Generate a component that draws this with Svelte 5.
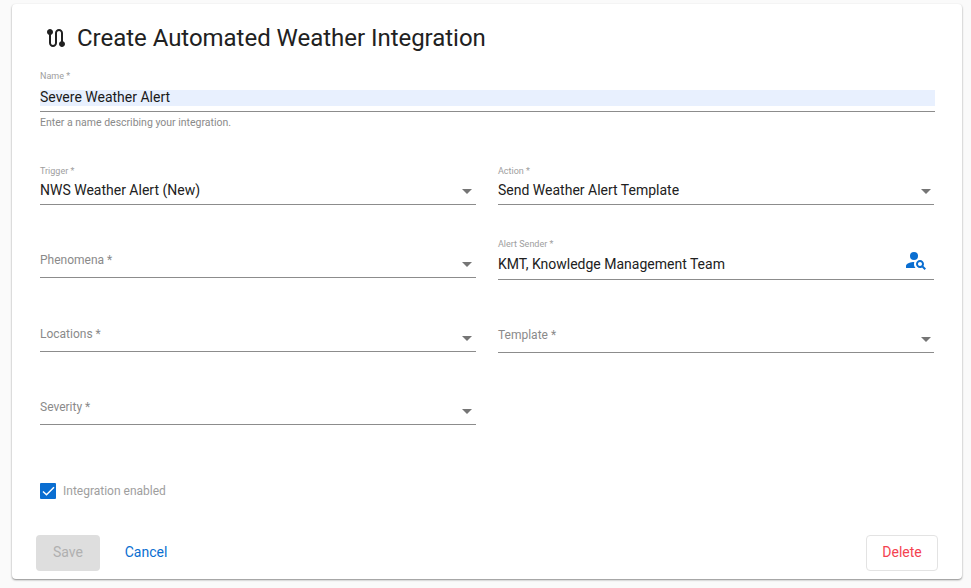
<script>
	const leftFields = [
		{ label: 'Trigger *', value: 'NWS Weather Alert (New)' },
		{ label: 'Phenomena *', value: '' },
		{ label: 'Locations *', value: '' },
		{ label: 'Severity *', value: '' }
	];
	const rightFields = [
		{ label: 'Action *', value: 'Send Weather Alert Template' },
		{ label: 'Alert Sender *', value: 'KMT, Knowledge Management Team', search: true },
		{ label: 'Template *', value: '' }
	];
</script>

{#snippet field(f)}
	<div class="field" class:tall={f.search}>
		{#if f.value}
			<span class="field__label">{f.label}</span>
			<span class="field__value">{f.value}</span>
		{:else}
			<span class="field__placeholder">{f.label}</span>
		{/if}
		{#if f.search}
			<svg class="field__search" viewBox="0 0 24 24" width="24" height="24" aria-hidden="true">
				<circle cx="10" cy="8" r="4" />
				<path d="M10.35 14.01C7.62 13.91 2 15.27 2 18v2h9.54c-2.47-2.76-1.23-5.89-1.19-5.99z" />
				<path d="M19.43 18.02c.36-.59.57-1.28.57-2.02 0-2.21-1.79-4-4-4s-4 1.79-4 4 1.79 4 4 4c.74 0 1.43-.22 2.02-.57L20.59 22 22 20.59l-2.57-2.57zM16 18c-1.1 0-2-.9-2-2s.9-2 2-2 2 .9 2 2-.9 2-2 2z" />
			</svg>
		{:else}
			<span class="field__arrow"></span>
		{/if}
	</div>
{/snippet}

<div class="page">
	<main class="card">
		<h1 class="title">
			<svg viewBox="0 0 24 24" width="24" height="24" aria-hidden="true">
				<path d="M19 15.18V7c0-2.21-1.79-4-4-4s-4 1.79-4 4v10c0 1.1-.9 2-2 2s-2-.9-2-2V8.82C8.16 8.4 9 7.3 9 6c0-1.66-1.34-3-3-3S3 4.34 3 6c0 1.3.84 2.4 2 2.82V17c0 2.21 1.79 4 4 4s4-1.79 4-4V7c0-1.1.9-2 2-2s2 .9 2 2v8.18c-1.16.41-2 1.51-2 2.82 0 1.66 1.34 3 3 3s3-1.34 3-3c0-1.3-.84-2.4-2-2.82z" />
			</svg>
			Create Automated Weather Integration
		</h1>

		<div class="name">
			<span class="field__label">Name *</span>
			<span class="name__value">Severe Weather Alert</span>
			<span class="name__help">Enter a name describing your integration.</span>
		</div>

		<div class="columns">
			<div class="column">
				{#each leftFields as f}
					{@render field(f)}
				{/each}
			</div>
			<div class="column">
				{#each rightFields as f}
					{@render field(f)}
				{/each}
			</div>
		</div>

		<div class="check">
			<span class="check__box">
				<svg viewBox="0 0 16 16" width="16" height="16" aria-hidden="true">
					<path d="M3 8.5l3.5 3.2L14 4.3" />
				</svg>
			</span>
			<span>Integration enabled</span>
		</div>

		<div class="actions">
			<button class="btn btn--save" disabled>Save</button>
			<button class="btn btn--cancel">Cancel</button>
			<button class="btn btn--delete">Delete</button>
		</div>
	</main>
</div>

<style>
	:global(body) {
		background: #fafafa;
		font-family: Roboto, "Liberation Sans", sans-serif;
	}
	.page {
		height: 588px;
		padding: 4px 9px 9px 12px;
		box-sizing: border-box;
	}
	.card {
		height: 575px;
		box-sizing: border-box;
		background: #fff;
		border-radius: 4px;
		box-shadow: 0 1px 2px rgba(0, 0, 0, 0.45);
		padding: 16px 24px 8px 24px;
		display: flex;
		flex-direction: column;
	}
	.title {
		display: flex;
		align-items: center;
		gap: 9px;
		margin: 0 0 0 8px;
		height: 36px;
		font-size: 24px;
		font-weight: 400;
		letter-spacing: -0.03px;
		color: #212121;
	}
	.title svg {
		fill: #212121;
	}
	.name {
		display: flex;
		flex-direction: column;
		margin: 14px 3px 0 4px;
	}
	.name__value {
		margin-top: 8px;
		height: 16px;
		line-height: 15px;
		font-size: 14px;
		color: #1a1a1a;
		background: #e8f0fe;
	}
	.name__help {
		margin-top: 5px;
		padding-top: 5px;
		border-top: 1px solid #8c8c8c;
		font-size: 10.5px;
		line-height: 12px;
		color: #8a8a8a;
	}
	.columns {
		display: grid;
		grid-template-columns: 436px 436px;
		column-gap: 22px;
		margin: 22px 0 0 4px;
	}
	.column {
		display: flex;
		flex-direction: column;
		gap: 19.33px;
	}
	.field {
		position: relative;
		height: 54px;
		box-sizing: border-box;
		border-bottom: 1px solid #8c8c8c;
		display: flex;
		flex-direction: column;
		justify-content: flex-end;
		padding-bottom: 6px;
	}
	.field.tall {
		height: 55.5px;
		padding-bottom: 7px;
	}
	.field__label {
		font-size: 9px;
		line-height: 12px;
		color: #9e9e9e;
	}
	.field__value {
		margin-top: 5px;
		font-size: 14px;
		line-height: 16px;
		color: #212121;
	}
	.tall .field__value {
		margin-top: 6px;
	}
	.field__placeholder {
		margin-bottom: 3px;
		font-size: 12px;
		line-height: 16px;
		color: #8a8a8a;
	}
	.field__arrow {
		position: absolute;
		right: 3px;
		bottom: 10px;
		border: 5px solid transparent;
		border-top-color: #757575;
		border-bottom-width: 0;
	}
	.column:first-child .field__arrow {
		right: 4px;
	}
	.field__search {
		position: absolute;
		right: 6px;
		bottom: 7px;
		fill: #0a6ed1;
	}
	.check {
		display: flex;
		align-items: center;
		gap: 7px;
		margin: 58px 0 0 4px;
		font-size: 12px;
		color: #9e9e9e;
	}
	.check__box {
		width: 16px;
		height: 16px;
		border-radius: 1px;
		background: #0a6ed1;
	}
	.check__box svg {
		display: block;
		fill: none;
		stroke: #fff;
		stroke-width: 1.5;
	}
	.actions {
		display: flex;
		align-items: center;
		margin-top: auto;
	}
	.btn {
		height: 36px;
		padding: 0 0 2px;
		font-family: inherit;
		font-size: 14px;
		border: none;
		border-radius: 4px;
		background: none;
	}
	.btn--save {
		width: 64px;
		background: #dedede;
		color: #b0b0b0;
	}
	.btn--cancel {
		width: 64px;
		margin-left: 14px;
		color: #0a6ed1;
	}
	.btn--delete {
		width: 72px;
		margin-left: auto;
		border: 1px solid #e3e3e3;
		color: #f44250;
	}
</style>
